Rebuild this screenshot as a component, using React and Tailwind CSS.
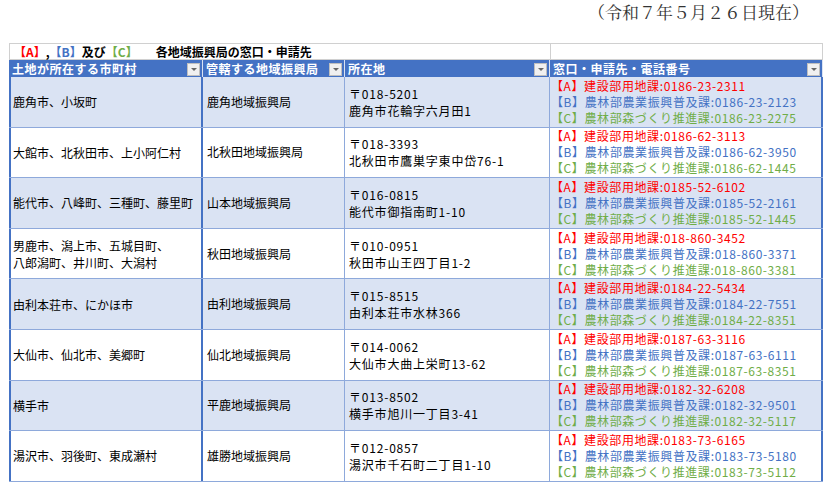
const rows = [
  ["鹿角市、小坂町", "鹿角地域振興局", "〒018-5201", "鹿角市花輪字六月田1", "0186-23-2311", "0186-23-2123", "0186-23-2275"],
  ["大館市、北秋田市、上小阿仁村", "北秋田地域振興局", "〒018-3393", "北秋田市鷹巣字東中岱76-1", "0186-62-3113", "0186-62-3950", "0186-62-1445"],
  ["能代市、八峰町、三種町、藤里町", "山本地域振興局", "〒016-0815", "能代市御指南町1-10", "0185-52-6102", "0185-52-2161", "0185-52-1445"],
  ["男鹿市、潟上市、五城目町、\n八郎潟町、井川町、大潟村", "秋田地域振興局", "〒010-0951", "秋田市山王四丁目1-2", "018-860-3452", "018-860-3371", "018-860-3381"],
  ["由利本荘市、にかほ市", "由利地域振興局", "〒015-8515", "由利本荘市水林366", "0184-22-5434", "0184-22-7551", "0184-22-8351"],
  ["大仙市、仙北市、美郷町", "仙北地域振興局", "〒014-0062", "大仙市大曲上栄町13-62", "0187-63-3116", "0187-63-6111", "0187-63-8351"],
  ["横手市", "平鹿地域振興局", "〒013-8502", "横手市旭川一丁目3-41", "0182-32-6208", "0182-32-9501", "0182-32-5117"],
  ["湯沢市、羽後町、東成瀬村", "雄勝地域振興局", "〒012-0857", "湯沢市千石町二丁目1-10", "0183-73-6165", "0183-73-5180", "0183-73-5112"],
];

const Filter = () => (
  <span className="ml-auto flex h-[13px] w-[13px] shrink-0 items-center justify-center border border-[#bfbfbf] bg-[#f0f0f0]">
    <span className="h-0 w-0 border-x-[3px] border-t-[3px] border-x-transparent border-t-[#666]" />
  </span>
);

export default function App() {
  return (
    <div className="h-[485px] w-[827px] bg-white text-[12px] text-black" style={{ fontFamily: '"Noto Sans CJK JP", sans-serif' }}>
      <div className="flex h-[43px] justify-end pr-[18px] text-[17px] leading-[24px] text-[#333]" style={{ fontFamily: '"Noto Serif CJK JP", "Liberation Serif", "Noto Sans CJK JP", serif' }}>
        （令和７年５月２６日現在）
      </div>
      <div className="ml-[9px] w-[814px]">
        <div className="grid h-[17px] grid-cols-[194px_142px_205px_273px] border border-[#d0d0d0] text-[12px] font-bold leading-[15px]">
          <div className="col-span-3 flex items-center border-r border-[#d0d0d0] pl-[4px]">
            <span className="text-[#ff0000]">【A】</span>,<span className="text-[#4472c4]">【B】</span>及び<span className="text-[#70ad47]">【C】</span>
            <span className="ml-[18px]">各地域振興局の窓口・申請先</span>
          </div>
          <div />
        </div>
        <div className="grid h-[17px] grid-cols-[194px_142px_205px_273px] bg-[#4472c4] font-bold tracking-[0.5px] text-white">
          {["土地が所在する市町村", "管轄する地域振興局", "所在地", "窓口・申請先・電話番号"].map((h, i) => (
            <div key={i} className="flex items-center border-r border-[#dae3f3] pl-[3px] pr-[2px]">
              {h}
              <Filter />
            </div>
          ))}
        </div>
        {rows.map((r, i) => (
          <div key={i} className={`grid h-[50.6px] grid-cols-[194px_142px_205px_273px] border-b border-[#8ea9db] ${i % 2 === 0 ? "bg-[#dae3f3]" : "bg-white"}`}>
            <div className="flex items-center whitespace-pre-line border-x-2 border-[#4472c4] pl-[2px] leading-[17px]">{r[0]}</div>
            <div className="flex items-center border-r border-[#8ea9db] pl-[4px]">{r[1]}</div>
            <div className="flex flex-col justify-center border-r border-[#8ea9db] pl-[4px] leading-[17px] tracking-[0.8px]">
              <span>{r[2]}</span>
              <span>{r[3]}</span>
            </div>
            <div className="flex flex-col justify-center border-r-2 border-[#4472c4] pl-[1px] text-[12px] leading-[16px] tracking-[0.6px]">
              <span className="text-[#ff0000]">【A】建設部用地課:{r[4]}</span>
              <span className="text-[#4472c4]">【B】農林部農業振興普及課:{r[5]}</span>
              <span className="text-[#70ad47]">【C】農林部森づくり推進課:{r[6]}</span>
            </div>
          </div>
        ))}
      </div>
    </div>
  );
}
